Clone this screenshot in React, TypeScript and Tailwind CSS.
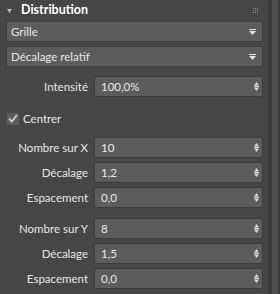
import React from 'react'

const font = { fontFamily: 'Lato, "Liberation Sans", sans-serif' }

function DropArrow() {
  return (
    <svg width="7" height="6" viewBox="0 0 7 6" className="shrink-0">
      <rect x="0" y="0" width="7" height="1" fill="#e6e6e6" />
      <path d="M0 2 H7 L3.5 6 Z" fill="#e6e6e6" />
    </svg>
  )
}

function Spinner() {
  return (
    <svg width="5" height="9" viewBox="0 0 5 9" className="shrink-0">
      <path d="M2.5 0 L5 3.5 H0 Z" fill="#d8d8d8" />
      <rect x="0" y="4" width="5" height="1" fill="#d8d8d8" />
      <path d="M0 5.5 H5 L2.5 9 Z" fill="#d8d8d8" />
    </svg>
  )
}

function Dropdown({ value }: { value: string }) {
  return (
    <div className="h-[21px] flex items-center justify-between bg-[#5c5c5c] border border-[#3c3c3c] rounded-[2px] pl-[4px] pr-[6px]">
      <span className="text-[11.5px] text-[#e6e6e6]">{value}</span>
      <DropArrow />
    </div>
  )
}

function NumRow({ label, value }: { label: string; value: string }) {
  return (
    <div className="flex items-center h-[21px]">
      <div className="w-[82px] text-right text-[11.5px] text-[#e6e6e6]">{label}</div>
      <div className="ml-[6px] flex-1 h-[21px] flex items-center justify-between bg-[#5c5c5c] border border-[#3c3c3c] rounded-[2px] pl-[6px] pr-[3px]">
        <span className="text-[11.5px] text-[#eaeaea]">{value}</span>
        <Spinner />
      </div>
    </div>
  )
}

export default function App() {
  return (
    <div className="w-[280px] h-[294px] bg-[#444444] flex overflow-hidden" style={font}>
      <div className="w-[269px] h-full bg-[#464646] border-r border-[#3a3a3a] flex flex-col">
        {/* header */}
        <div className="h-[21px] flex items-center pl-[7px] pr-[10px]">
          <svg width="5" height="4" viewBox="0 0 5 4" className="shrink-0">
            <path d="M0 0 H5 L2.5 4 Z" fill="#bdbdbd" />
          </svg>
          <span className="ml-[9px] text-[12.5px] font-bold text-white flex-1 leading-none">Distribution</span>
          <svg width="5" height="5" viewBox="0 0 5 5">
            {[0, 2, 4].map((x) =>
              [0, 2, 4].map((y) => <rect key={`${x}-${y}`} x={x} y={y} width="1" height="1" fill="#8a8a8a" />)
            )}
          </svg>
        </div>

        <div className="pl-[6px] pr-[5px] flex flex-col gap-[4px]">
          <Dropdown value="Grille" />
          <Dropdown value="Décalage relatif" />
        </div>

        <div className="pl-[6px] pr-[5px] mt-[9px]">
          <NumRow label="Intensité" value="100,0%" />
        </div>

        <div className="flex items-center pl-[7px] mt-[15px] h-[13px]">
          <div className="w-[12px] h-[12px] bg-[#5c5c5c] flex items-center justify-center">
            <svg width="10" height="9" viewBox="0 0 10 9">
              <path d="M1 4.5 L3.8 7.5 L9 1" stroke="#d0d0d0" strokeWidth="1.8" fill="none" />
            </svg>
          </div>
          <span className="ml-[4px] text-[11.5px] text-[#e6e6e6]">Centrer</span>
        </div>

        <div className="pl-[6px] pr-[5px] mt-[12px] flex flex-col gap-[4px]">
          <NumRow label="Nombre sur X" value="10" />
          <NumRow label="Décalage" value="1,2" />
          <NumRow label="Espacement" value="0,0" />
        </div>

        <div className="pl-[6px] pr-[5px] mt-[10px] flex flex-col gap-[4px]">
          <NumRow label="Nombre sur Y" value="8" />
          <NumRow label="Décalage" value="1,5" />
          <NumRow label="Espacement" value="0,0" />
        </div>
      </div>
      <div className="w-[3px] h-full bg-[#3b3b3b]" />
      <div className="w-[6px] h-full bg-[#4c4c4c]" />
      <div className="w-[2px] h-full bg-[#3b3b3b]" />
    </div>
  )
}
